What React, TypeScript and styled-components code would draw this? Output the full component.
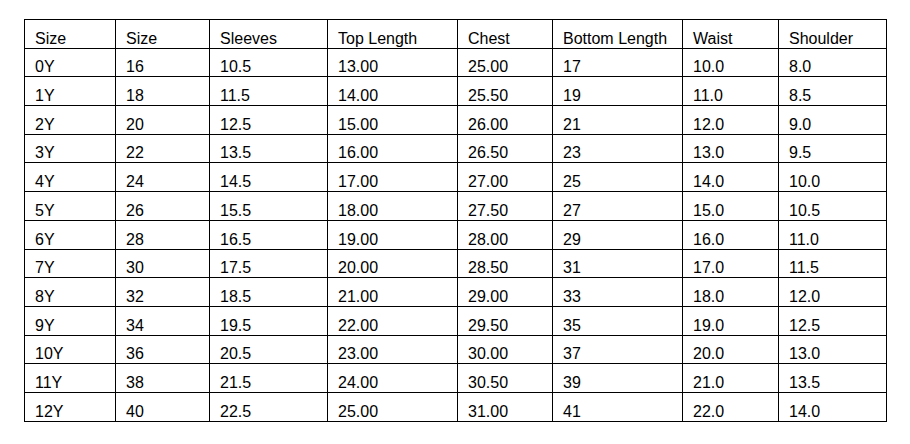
import styled, { createGlobalStyle } from 'styled-components';

const GlobalStyle = createGlobalStyle`
  html, body {
    margin: 0;
    padding: 0;
    background: #ffffff;
  }
  body {
    font-family: "Liberation Sans", Arial, sans-serif;
    color: #000000;
  }
`;

const columns = [
	{ title: 'Size', width: 91 },
	{ title: 'Size', width: 94 },
	{ title: 'Sleeves', width: 118 },
	{ title: 'Top Length', width: 130 },
	{ title: 'Chest', width: 95 },
	{ title: 'Bottom Length', width: 130 },
	{ title: 'Waist', width: 96 },
	{ title: 'Shoulder', width: 108 },
];

const sizeData = [
	['0Y', '16', '10.5', '13.00', '25.00', '17', '10.0', '8.0'],
	['1Y', '18', '11.5', '14.00', '25.50', '19', '11.0', '8.5'],
	['2Y', '20', '12.5', '15.00', '26.00', '21', '12.0', '9.0'],
	['3Y', '22', '13.5', '16.00', '26.50', '23', '13.0', '9.5'],
	['4Y', '24', '14.5', '17.00', '27.00', '25', '14.0', '10.0'],
	['5Y', '26', '15.5', '18.00', '27.50', '27', '15.0', '10.5'],
	['6Y', '28', '16.5', '19.00', '28.00', '29', '16.0', '11.0'],
	['7Y', '30', '17.5', '20.00', '28.50', '31', '17.0', '11.5'],
	['8Y', '32', '18.5', '21.00', '29.00', '33', '18.0', '12.0'],
	['9Y', '34', '19.5', '22.00', '29.50', '35', '19.0', '12.5'],
	['10Y', '36', '20.5', '23.00', '30.00', '37', '20.0', '13.0'],
	['11Y', '38', '21.5', '24.00', '30.50', '39', '21.0', '13.5'],
	['12Y', '40', '22.5', '25.00', '31.00', '41', '22.0', '14.0'],
];

export default function App() {
	return (
		<>
			<GlobalStyle />
			<Page>
				<SizeTable>
					<colgroup>
						{columns.map((col, index) => (
							<col key={index} style={{ width: col.width }} />
						))}
					</colgroup>
					<thead>
						<tr>
							{columns.map((col, index) => (
								<HeadCell key={index}>{col.title}</HeadCell>
							))}
						</tr>
					</thead>
					<tbody>
						{sizeData.map((row, index) => (
							<tr key={index}>
								{row.map((value, i) => (
									<Cell key={i}>{value}</Cell>
								))}
							</tr>
						))}
					</tbody>
				</SizeTable>
			</Page>
		</>
	);
}

const Page = styled.div`
	padding: 19px 0 0 24px;
	width: 910px;
	height: 444px;
	box-sizing: border-box;
	background: #ffffff;
`;

const SizeTable = styled.table`
	border-collapse: collapse;
	table-layout: fixed;
	width: 863px;
	font-family: "Liberation Sans", Arial, sans-serif;
	font-size: 16px;
	color: #000000;
`;

const Cell = styled.td`
	border: 1px solid #000000;
	height: 28.7px;
	padding: 0 4px 0 10px;
	vertical-align: bottom;
	text-align: left;
	font-weight: normal;
	white-space: nowrap;
	overflow: hidden;
	box-sizing: border-box;
`;

const HeadCell = styled(Cell).attrs({ as: 'th' })``;
